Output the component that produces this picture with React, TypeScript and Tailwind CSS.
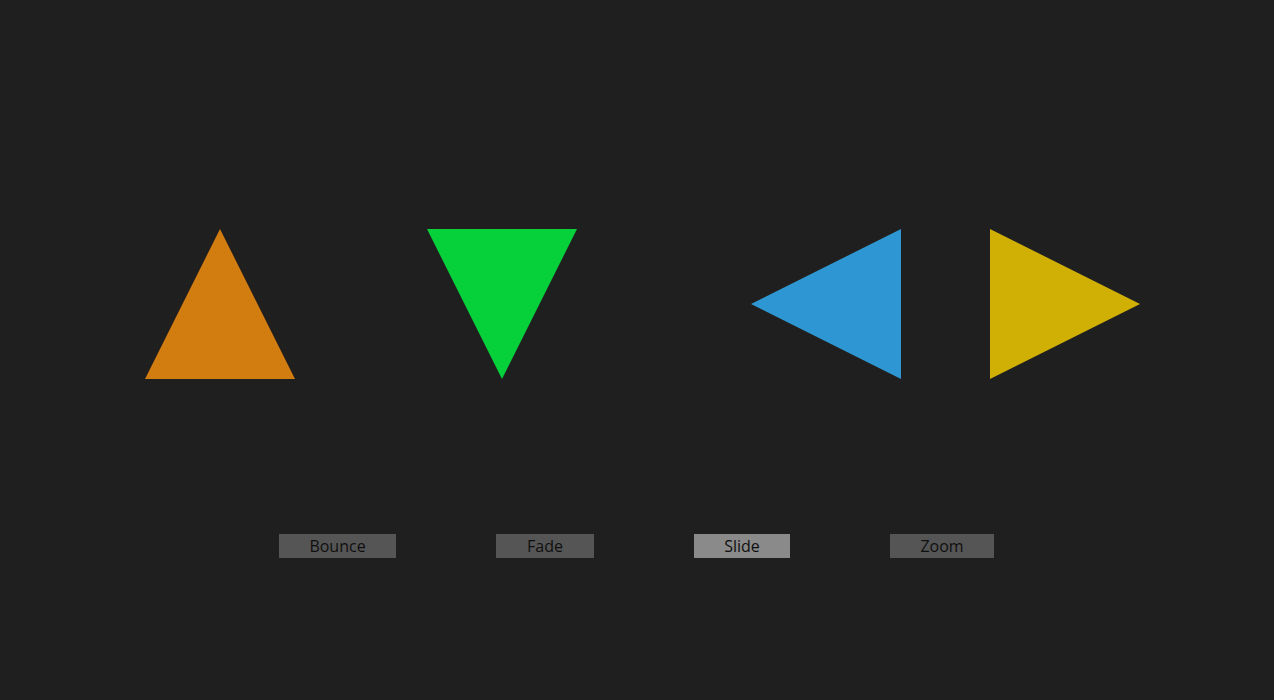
import React from "react";

function Tri({ points, color }: { points: string; color: string }) {
  return (
    <svg width="150" height="150" viewBox="0 0 150 150" className="block shrink-0">
      <polygon points={points} fill={color} />
    </svg>
  );
}

export default function App() {
  const btns = [
    { label: "Bounce", w: "w-[117px]", bg: "bg-[#555555]" },
    { label: "Fade", w: "w-[98px]", bg: "bg-[#555555]" },
    { label: "Slide", w: "w-[96px]", bg: "bg-[#8a8a8a]" },
    { label: "Zoom", w: "w-[104px]", bg: "bg-[#555555]" },
  ];
  return (
    <div className="w-[1274px] h-[700px] bg-[#1f1f1f] flex flex-col overflow-hidden" style={{ fontFamily: "'Open Sans', Lato, sans-serif" }}>
      <div className="flex flex-row pt-[229px] pl-[145px]">
        <Tri points="75,0 150,150 0,150" color="#d17d10" />
        <div className="ml-[132px]">
          <Tri points="0,0 150,0 75,150" color="#06d13a" />
        </div>
        <div className="ml-[174px]">
          <Tri points="150,0 150,150 0,75" color="#2d96d3" />
        </div>
        <div className="ml-[89px]">
          <Tri points="0,0 150,75 0,150" color="#d1b005" />
        </div>
      </div>
      <div className="flex flex-row justify-start pl-[279px] gap-[100px] mt-[155px]">
        {btns.map((b) => (
          <div
            key={b.label}
            className={`${b.w} ${b.bg} h-[24px] flex items-center justify-center text-[16px] text-[#0f0f0f] leading-none`}
          >
            {b.label}
          </div>
        ))}
      </div>
    </div>
  );
}
